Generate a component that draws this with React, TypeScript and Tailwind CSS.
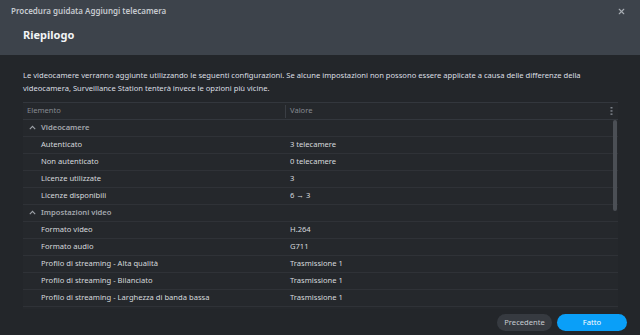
import React from "react";
import { X } from "lucide-react";

type Row = { label: string; value?: string; group?: boolean };

const rows: Row[] = [
  { label: "Videocamere", group: true },
  { label: "Autenticato", value: "3 telecamere" },
  { label: "Non autenticato", value: "0 telecamere" },
  { label: "Licenze utilizzate", value: "3" },
  { label: "Licenze disponibili", value: "6 → 3" },
  { label: "Impostazioni video", group: true },
  { label: "Formato video", value: "H.264" },
  { label: "Formato audio", value: "G711" },
  { label: "Profilo di streaming - Alta qualità", value: "Trasmissione 1" },
  { label: "Profilo di streaming - Bilanciato", value: "Trasmissione 1" },
  { label: "Profilo di streaming - Larghezza di banda bassa", value: "Trasmissione 1" },
];

const Chevron = () => (
  <svg width="7" height="5" viewBox="0 0 7 5" className="mr-[5px]">
    <path d="M0.8 4.2 L3.5 1.4 L6.2 4.2" fill="none" stroke="#9ea2a8" strokeWidth="1.1" />
  </svg>
);

const App = () => {
  return (
    <div className="w-[640px] h-[335px] flex flex-col bg-[#23262a] font-['Noto_Sans',sans-serif] overflow-hidden">
      {/* Header */}
      <div className="h-[55px] bg-[#3d434b] flex flex-col px-[11px] pt-[4px]">
        <div className="flex items-center justify-between h-[14px]">
          <span className="text-[8px] font-semibold text-[#c6cacf]">
            Procedura guidata Aggiungi telecamera
          </span>
          <X className="w-[9px] h-[9px] text-[#a8adb4] mr-[3px]" strokeWidth={3} />
        </div>
        <div className="pl-[12px] mt-[10px] text-[11px] font-bold text-[#f2f4f6] leading-[14px]">
          Riepilogo
        </div>
      </div>

      {/* Body */}
      <div className="flex-1 flex flex-col px-[23px] pt-[14px] pr-[22px]">
        <p className="text-[7.6px] leading-[13px] text-[#dcdfe3]">
          Le videocamere verranno aggiunte utilizzando le seguenti configurazioni. Se alcune impostazioni non possono essere applicate a causa delle differenze della videocamera, Surveillance Station tenterà invece le opzioni più vicine.
        </p>

        <div className="mt-[7px] h-[207px] flex flex-col border-t border-[#33373d] bg-[#25282c]">
          {/* Table header */}
          <div className="h-[17px] flex items-center border-b border-[#33373d] text-[7.6px] text-[#858a91]">
            <div className="w-[262px] pl-[4px]">Elemento</div>
            <div className="w-px h-[13px] bg-[#3a3e44]" />
            <div className="flex-1 pl-[4px]">Valore</div>
            <div className="w-[13px] flex justify-center">
              <svg width="3" height="8" viewBox="0 0 3 8">
                <rect x="0.5" y="0" width="2" height="1.5" fill="#7c8189" />
                <rect x="0.5" y="3.2" width="2" height="1.5" fill="#7c8189" />
                <rect x="0.5" y="6.4" width="2" height="1.5" fill="#7c8189" />
              </svg>
            </div>
          </div>

          {/* Table body */}
          <div className="relative flex-1 overflow-hidden">
            {rows.map((r, i) => (
              <div
                key={i}
                className="h-[17px] flex items-center border-b border-[#2f3237] text-[7.6px]"
              >
                {r.group ? (
                  <div className="flex items-center pl-[6px] font-semibold text-[#a3a7ad]">
                    <Chevron />
                    {r.label}
                  </div>
                ) : (
                  <>
                    <div className="w-[263px] pl-[18px] text-[#d6d9dd]">{r.label}</div>
                    <div className="flex-1 pl-[4px] text-[#d6d9dd]">{r.value}</div>
                  </>
                )}
              </div>
            ))}
            {/* scrollbar */}
            <div className="absolute right-[1px] top-0 w-[4px] h-[91px] rounded-full bg-[#4b4f55]" />
          </div>
        </div>

        {/* Footer */}
        <div className="flex justify-end gap-[5px] mt-[5px] mr-[-9px]">
          <button className="h-[17px] w-[55px] rounded-full bg-[#363a40] text-[7.6px] text-[#c9ccd1]">
            Precedente
          </button>
          <button className="h-[17px] w-[70px] rounded-full bg-[#0a9ff8] text-[7.6px] text-white">
            Fatto
          </button>
        </div>
      </div>
    </div>
  );
};

export default App;
